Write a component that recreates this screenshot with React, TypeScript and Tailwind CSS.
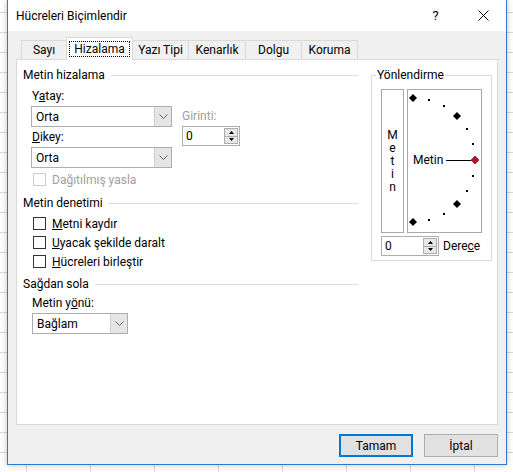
import React from "react";

const tabs = [
  { label: "Sayı", w: "w-[46px]" },
  { label: "Hizalama", w: "w-[67px]", active: true },
  { label: "Yazı Tipi", w: "w-[57px]" },
  { label: "Kenarlık", w: "w-[58px]" },
  { label: "Dolgu", w: "w-[57px]" },
  { label: "Koruma", w: "w-[57px]" },
];

function Chevron() {
  return (
    <svg width="9" height="6" viewBox="0 0 9 6">
      <path d="M0.5 0.5 L4.5 4.5 L8.5 0.5" fill="none" stroke="#606060" strokeWidth="1" />
    </svg>
  );
}

function Select({ value, width }: { value: string; width: string }) {
  return (
    <div className={`flex h-[21px] ${width} items-stretch border border-[#adadad] bg-white`}>
      <span className="flex flex-1 items-center pl-[4px] leading-none">{value}</span>
      <span className="flex w-[17px] items-center justify-center border-l border-[#cfcfcf] bg-[#e5e5e5]">
        <Chevron />
      </span>
    </div>
  );
}

function Spin({ width }: { width: string }) {
  return (
    <div className={`flex h-[20px] ${width} items-stretch border border-[#adadad] bg-white`}>
      <span className="flex flex-1 items-center pl-[3px] leading-none">0</span>
      <span className="my-[1px] mr-[1px] flex w-[14px] flex-col border border-[#adadad] bg-[#e8e8e8]">
        <span className="flex flex-1 items-center justify-center border-b border-[#adadad]">
          <svg width="5" height="3" viewBox="0 0 5 3">
            <path d="M0 3 L2.5 0 L5 3 Z" fill="#000" />
          </svg>
        </span>
        <span className="flex flex-1 items-center justify-center">
          <svg width="5" height="3" viewBox="0 0 5 3">
            <path d="M0 0 L2.5 3 L5 0 Z" fill="#000" />
          </svg>
        </span>
      </span>
    </div>
  );
}

function Header({ children, className = "" }: { children: React.ReactNode; className?: string }) {
  return (
    <div className={`flex h-[16px] items-center gap-[6px] ${className}`}>
      <span className="leading-[16px]">{children}</span>
      <span className="h-px flex-1 bg-[#dcdcdc]" />
    </div>
  );
}

function Check({ children, disabled }: { children: React.ReactNode; disabled?: boolean }) {
  return (
    <div className={`flex h-[19px] items-center gap-[6px] pl-[2px] ${disabled ? "text-[#a0a0a0]" : ""}`}>
      <span
        className={`h-[13px] w-[13px] border bg-white ${disabled ? "border-[#cccccc]" : "border-[#333333]"}`}
      />
      <span className="leading-[16px]">{children}</span>
    </div>
  );
}

function Dial() {
  const cx = 5;
  const cy = 70;
  const r = 62;
  const pt = (deg: number) => {
    const a = (deg * Math.PI) / 180;
    return [cx + r * Math.cos(a), cy - r * Math.sin(a)];
  };
  const diamonds = [90, 45, -45, -90];
  const dots = [75, 60, 30, 15, -15, -30, -60, -75];
  const d = (x: number, y: number, s: number) =>
    `M${x} ${y - s} L${x + s} ${y} L${x} ${y + s} L${x - s} ${y} Z`;
  return (
    <svg width="73" height="142" viewBox="0 0 73 142">
      {dots.map((a) => {
        const [x, y] = pt(a);
        return <rect key={a} x={Math.round(x) - 1} y={Math.round(y) - 1} width="2" height="2" fill="#000" />;
      })}
      {diamonds.map((a) => {
        const [x, y] = pt(a);
        return <path key={a} d={d(Math.round(x), Math.round(y), 4)} fill="#000" />;
      })}
      <text x="5" y="74" fontSize="12" fontFamily="Roboto, sans-serif" fill="#000">
        Metin
      </text>
      <line x1="38" y1="70.5" x2="63" y2="70.5" stroke="#000" strokeWidth="1" />
      <path d={d(67, 70, 4)} fill="#c0102a" stroke="#5a0010" strokeWidth="0.6" />
    </svg>
  );
}

export default function App() {
  return (
    <div className="h-[472px] w-[513px] overflow-hidden bg-white bg-[repeating-linear-gradient(180deg,transparent_0px,transparent_12px,#dadada_12px,#dadada_13px,transparent_13px,transparent_20px),repeating-linear-gradient(90deg,transparent_0px,transparent_26px,#dadada_26px,#dadada_27px,transparent_27px,transparent_64px)] font-['Roboto',sans-serif] text-[12px] text-black">
      <div className="ml-[7px] flex h-[465px] w-[500px] flex-col border-x border-b border-[#2b79d0] bg-[#f0f0f0] shadow-[0_0_6px_rgba(0,0,0,0.25)]">
        {/* title bar */}
        <div className="flex h-[31px] items-center bg-white">
          <span className="flex-1 pl-[8px] leading-none">Hücreleri Biçimlendir</span>
          <span className="flex w-[46px] justify-center pr-[3px] text-[13px] leading-none">?</span>
          <span className="flex w-[46px] justify-center">
            <svg width="11" height="11" viewBox="0 0 11 11">
              <path d="M0.5 0.5 L10.5 10.5 M10.5 0.5 L0.5 10.5" stroke="#000" strokeWidth="1" />
            </svg>
          </span>
        </div>

        {/* tabs */}
        <div className="flex h-[28px] items-end pl-[14px]">
          {tabs.map((t) =>
            t.active ? (
              <div
                key={t.label}
                className={`relative z-10 -mb-px -ml-px flex h-[23px] ${t.w} items-center justify-center border border-b-0 border-[#d9d9d9] bg-white`}
              >
                <span className="border border-dotted border-black px-[4px] leading-[14px]">{t.label}</span>
              </div>
            ) : (
              <div
                key={t.label}
                className={`-ml-px flex h-[19px] ${t.w} items-center justify-center border border-b-0 border-[#d9d9d9] leading-none`}
              >
                {t.label}
              </div>
            ),
          )}
        </div>

        {/* panel */}
        <div className="mx-[8px] flex h-[366px] gap-[13px] border border-[#d9d9d9] bg-white pl-[6px] pt-[7px]">
          <div className="w-[335px]">
            <Header>Metin hizalama</Header>
            <div className="mt-[5px] flex pl-[8px]">
              <div className="w-[141px]">
                <div className="h-[16px] pl-[1px] leading-[16px]">
                  Y<span className="underline">a</span>tay:
                </div>
                <div className="mt-[2px]">
                  <Select value="Orta" width="w-[141px]" />
                </div>
                <div className="mt-[2px] h-[16px] pl-[1px] leading-[16px]">
                  <span className="underline">D</span>ikey:
                </div>
                <div className="mt-[2px]">
                  <Select value="Orta" width="w-[141px]" />
                </div>
                <div className="mt-[2px]">
                  <Check disabled>Dağıtılmış yasla</Check>
                </div>
              </div>
              <div className="ml-[10px]">
                <div className="mt-[20px] h-[16px] leading-[16px] text-[#a0a0a0]">Girinti:</div>
                <div className="mt-[2px]">
                  <Spin width="w-[58px]" />
                </div>
              </div>
            </div>

            <Header className="mt-[6px]">Metin denetimi</Header>
            <div className="mt-[3px] pl-[8px]">
              <Check>
                <span className="underline">M</span>etni kaydır
              </Check>
              <Check>
                <span className="underline">U</span>yacak şekilde daralt
              </Check>
              <Check>
                <span className="underline">H</span>ücreleri birleştir
              </Check>
            </div>

            <Header className="mt-[5px]">Sağdan sola</Header>
            <div className="mt-[3px] pl-[9px]">
              <div className="h-[16px] leading-[16px]">
                Metin y<span className="underline">ö</span>nü:
              </div>
              <div className="mt-[2px]">
                <Select value="Bağlam" width="w-[96px]" />
              </div>
            </div>
          </div>

          <fieldset className="h-[194px] w-[120px] border border-[#dcdcdc] px-[9px] pb-[5px]">
            <legend className="-ml-[5px] px-[1px] leading-[16px]">Yönlendirme</legend>
            <div className="mt-[6px] flex gap-[3px]">
              <div className="flex h-[144px] w-[23px] flex-col items-center justify-center border border-[#a8a8a8] leading-[13px]">
                <span>M</span>
                <span>e</span>
                <span>t</span>
                <span>i</span>
                <span>n</span>
              </div>
              <div className="h-[144px] w-[75px] border border-[#a8a8a8]">
                <Dial />
              </div>
            </div>
            <div className="mt-[3px] flex items-center gap-[4px]">
              <Spin width="w-[58px]" />
              <span className="leading-[16px]">
                Dere<span className="underline">c</span>e
              </span>
            </div>
          </fieldset>
        </div>

        {/* buttons */}
        <div className="mt-[9px] flex justify-end gap-[11px] pr-[8px]">
          <button className="flex h-[23px] w-[74px] items-center justify-center border-2 border-[#0078d7] bg-[#e1e1e1] leading-none">
            Tamam
          </button>
          <button className="flex h-[23px] w-[74px] items-center justify-center border border-[#adadad] bg-[#e1e1e1] leading-none">
            İptal
          </button>
        </div>
      </div>
    </div>
  );
}
